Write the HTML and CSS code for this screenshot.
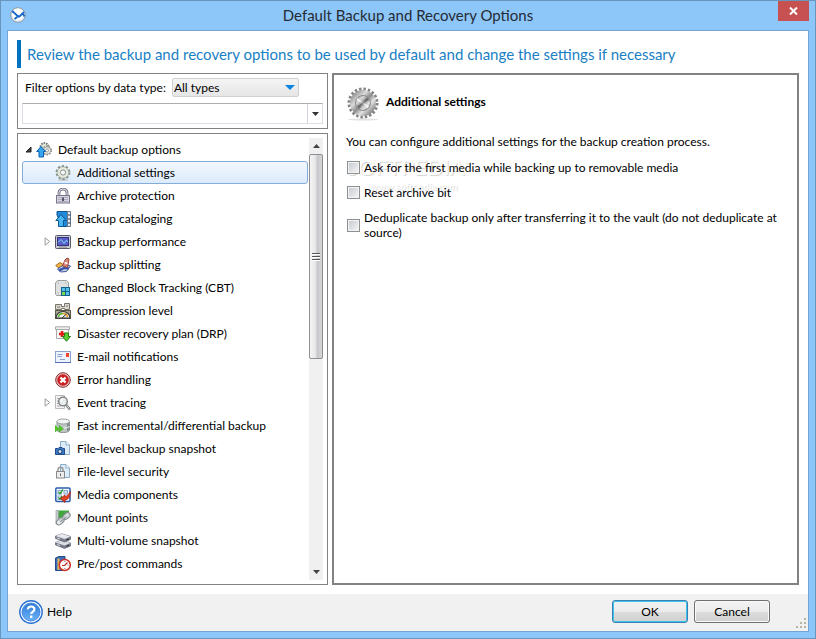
FILE: index.html
```html
<!DOCTYPE html>
<html lang="en">
<head>
    <meta charset="UTF-8">
    <meta name="viewport" content="width=device-width, initial-scale=1.0">
    <title>Default Backup and Recovery Options</title>
    <link rel="stylesheet" href="styles.css">
</head>
<body>
    <div class="window">
        <header class="titlebar">
            <svg class="app-icon" viewBox="0 0 16 16">
                <circle cx="8" cy="8" r="7.3" fill="#eceff1" stroke="#8a98a5"/>
                <circle cx="8" cy="7.2" r="5.8" fill="#fff"/>
                <path d="M2.2 4 7 8.500 9.500 9.500 14 5M8.500 9 4.500 12M12.500 6 14.500 9.500" fill="none" stroke="#1666c8" stroke-width="1.8"/>
            </svg>
            <h1>Default Backup and Recovery Options</h1>
            <button class="close" aria-label="Close">
                <svg viewBox="0 0 9 8"><path d="M1 .5 8 7.5M8 .5 1 7.5" stroke="#fff" stroke-width="2"/></svg>
            </button>
        </header>

        <div class="client">
            <main>
                <h2 class="intro">Review the backup and recovery options to be used by default and change the settings if necessary</h2>
                <div class="columns">
                    <div class="sidebar">
                        <form class="filter">
                            <div class="filter-row">
                                <label for="data-type">Filter options by data type:</label>
                                <div class="select-wrap">
                                    <select id="data-type">
                                        <option>All types</option>
                                    </select>
                                    <svg class="select-arrow" viewBox="0 0 10 5"><path d="M0 0H10L5 5Z" fill="#0a84e0"/></svg>
                                </div>
                            </div>
                            <div class="search">
                                <input type="text" aria-label="Search options">
                                <button type="button" aria-label="Show list">
                                    <svg viewBox="0 0 7 4"><path d="M0 0H7L3.5 4Z" fill="#333"/></svg>
                                </button>
                            </div>
                        </form>

                        <nav class="tree">
                            <ul>
                                <li class="root">
                                    <button class="expander" aria-label="Collapse"><svg viewBox="0 0 7 7"><path d="M6 1V6H1Z" fill="#404040" stroke="#222"/></svg></button>
                                    <a href="#">
                                        <svg class="icon" viewBox="0 0 16 16">
                                            <circle cx="8.5" cy="5" r="4" fill="#dfe3da" stroke="#77807a" stroke-width="2" stroke-dasharray="1.5 1"/>
                                            <circle cx="11" cy="8.5" r="4" fill="#eef0e8" stroke="#8a8f86" stroke-width="2" stroke-dasharray="1.5 1"/>
                                            <circle cx="11" cy="8.5" r="3.6" fill="#eef0e8" stroke="#8a8f86" stroke-width=".6"/>
                                            <circle cx="11" cy="8.5" r="1.5" fill="#fff" stroke="#777" stroke-width=".7"/>
                                            <path d="M5 4.500 .7 9.500H3V15H7.500V9.500H9.500Z" fill="#37a6ee" stroke="#0b5fae"/>
                                        </svg>
                                        Default backup options
                                    </a>
                                </li>
                                <li class="selected">
                                    <a href="#" aria-current="true">
                                        <svg class="icon" viewBox="0 0 16 16">
                                            <ellipse cx="8" cy="15" rx="5" ry="1" fill="#c4ccd2"/>
                                            <circle cx="8" cy="7.5" r="6.2" fill="none" stroke="#85918a" stroke-width="2.5" stroke-dasharray="2.2 1.7"/>
                                            <circle cx="8" cy="7.5" r="4" fill="none" stroke="#e6eadf" stroke-width="3.5"/>
                                            <circle cx="8" cy="7.5" r="5.7" fill="none" stroke="#98a292" stroke-width=".7"/>
                                            <circle cx="8" cy="7.5" r="2.6" fill="#f6fafd" stroke="#7d8781" stroke-width=".9"/>
                                        </svg>
                                        Additional settings
                                    </a>
                                </li>
                                <li>
                                    <a href="#">
                                        <svg class="icon" viewBox="0 0 16 16">
                                            <path d="M4 8V4.500A4 3.500 0 0 1 12 4.500V8" fill="none" stroke="#77758a" stroke-width="2.8"/>
                                            <path d="M4 8V4.500A4 3.500 0 0 1 12 4.500V8" fill="none" stroke="#dddde8"/>
                                            <rect x="1.5" y="7.5" width="13" height="7.5" fill="#d6d4e0" stroke="#77758a"/>
                                            <path d="M3 9.500H13M3 11.500H13M3 13.500H13" stroke="#a5a2b5" stroke-width=".8"/>
                                            <rect x="7" y="9.5" width="2" height="3.5" fill="#55536a"/>
                                        </svg>
                                        Archive protection
                                    </a>
                                </li>
                                <li>
                                    <a href="#">
                                        <svg class="icon" viewBox="0 0 16 16">
                                            <path d="M2 .5H12.500V15.500H7L2 4Z" fill="#2089d8" stroke="#0b5594"/>
                                            <path d="M12.500 .5H15.500V15.500H12.500Z" fill="#e9eef2" stroke="#637787"/>
                                            <path d="M13 4H15.500M13 8H15.500M13 12H15.500" stroke="#335"/>
                                            <path d="M6 3.500 .8 9.500H3.500V15.500H8.500V9.500H11.200Z" fill="#49b5f2" stroke="#0b5594"/>
                                        </svg>
                                        Backup cataloging
                                    </a>
                                </li>
                                <li>
                                    <button class="expander" aria-label="Expand"><svg viewBox="0 0 6 9"><path d="M.6 .8V8.200L5.200 4.500Z" fill="#fff" stroke="#999"/></svg></button>
                                    <a href="#">
                                        <svg class="icon" viewBox="0 0 16 16">
                                            <rect x=".5" y="1.5" width="15" height="13" rx="1" fill="#c9cbd3" stroke="#55576a"/>
                                            <rect x="2.5" y="3.5" width="11" height="8" fill="#5c5ccb" stroke="#33337a"/>
                                            <path d="M3 8.500 6 5.500 9 9.500 11 6.500 13 7.500" fill="none" stroke="#6fdef2"/>
                                            <path d="M4 13H12" stroke="#888"/>
                                        </svg>
                                        Backup performance
                                    </a>
                                </li>
                                <li>
                                    <a href="#">
                                        <svg class="icon" viewBox="0 0 16 16">
                                            <path d="M.7 8.500 5 5.500 9 8 4.500 11.500Z" fill="#f0b545" stroke="#a66b20"/>
                                            <path d="M2.500 12 9 7.500 15.500 9 11.500 14.500 5.500 15Z" fill="#c5cee8" stroke="#3e579a"/>
                                            <path d="M4 13.500 9 11 14 11.500" fill="none" stroke="#2f4ea5" stroke-width="2"/>
                                            <path d="M7.500 9 10 3Q12 -.5 14 2L12.500 10.500Z" fill="#d98a7e" stroke="#9d4234"/>
                                            <path d="M9.500 5.500 12.500 6.500" stroke="#fff" stroke-width="1.5"/>
                                        </svg>
                                        Backup splitting
                                    </a>
                                </li>
                                <li>
                                    <a href="#">
                                        <svg class="icon" viewBox="0 0 16 16">
                                            <path d="M2.500 .5H11.500L13.500 2.500V13.500L12 15.500H1.500L.5 14V3Z" fill="#dfe1e0" stroke="#999f9d"/>
                                            <path d="M2.500 3H4M10 3H11.500M2.500 13H4" stroke="#aaa"/>
                                            <rect x="6" y="7" width="9" height="9" fill="#14628a"/>
                                            <rect x="7" y="8" width="3" height="3" fill="#55c3ee"/>
                                            <rect x="11" y="8" width="3" height="3" fill="#55c3ee"/>
                                            <rect x="7" y="12" width="3" height="3" fill="#7bd94c"/>
                                            <rect x="11" y="12" width="3" height="3" fill="#55c3ee"/>
                                        </svg>
                                        Changed Block Tracking (CBT)
                                    </a>
                                </li>
                                <li>
                                    <a href="#">
                                        <svg class="icon" viewBox="0 0 16 16">
                                            <path d="M.5 1.500H6.500V3.500H9.500V.5H14.500V6.500H9.500V5.500H6.500V6.500H.5Z" fill="#dad8cf" stroke="#77756b"/>
                                            <path d="M2 4H5M11 3H13" stroke="#77756b"/>
                                            <rect x=".5" y="7.5" width="15" height="8" fill="#a9a593" stroke="#5d594a"/>
                                            <path d="M1 15A7 6.500 0 0 1 15 15Z" fill="#eee" stroke="#333" stroke-width="1.2"/>
                                            <path d="M3.500 14A4.500 4 0 0 1 8 10.500" fill="none" stroke="#5bb52c" stroke-width="1.5"/>
                                            <path d="M8 10.500A4.500 4 0 0 1 12.500 14" fill="none" stroke="#e5a323" stroke-width="1.5"/>
                                            <path d="M7 15 11.500 11" stroke="#333"/>
                                        </svg>
                                        Compression level
                                    </a>
                                </li>
                                <li>
                                    <a href="#">
                                        <svg class="icon" viewBox="0 0 16 16">
                                            <path d="M1.500 1.500H13.500V12.500H1.500Z" fill="#f7f7f7" stroke="#aaa"/>
                                            <path d="M.5 .8H14.500V3.500H.5Z" fill="#eee" stroke="#aaa"/>
                                            <path d="M7 5V11M4 8H10" stroke="#e01b13" stroke-width="2.5"/>
                                            <path d="M9.500 7H13.500V10.500H15.500L11.500 15.300 7.500 10.500H9.500Z" fill="#5dcd35" stroke="#257f13"/>
                                        </svg>
                                        Disaster recovery plan (DRP)
                                    </a>
                                </li>
                                <li>
                                    <a href="#">
                                        <svg class="icon" viewBox="0 0 16 16">
                                            <rect x=".5" y="2.5" width="15" height="11" fill="#edf3fd" stroke="#8da3ce"/>
                                            <path d="M0 13.500H16" stroke="#5770b5"/>
                                            <rect x="11" y="4" width="3" height="4" fill="#f0482d"/>
                                            <path d="M2.500 5.500H7.500M2.500 7.500H7M5 10.500H10" stroke="#8ba1cd"/>
                                        </svg>
                                        E-mail notifications
                                    </a>
                                </li>
                                <li>
                                    <a href="#">
                                        <svg class="icon" viewBox="0 0 16 16">
                                            <circle cx="8" cy="8" r="7.3" fill="#e2c5c5" stroke="#8d2a2a"/>
                                            <circle cx="8" cy="8" r="5.8" fill="#cc1f22"/>
                                            <path d="M5.500 5.500 10.500 10.500M10.500 5.500 5.500 10.500" stroke="#fff" stroke-width="2.4"/>
                                        </svg>
                                        Error handling
                                    </a>
                                </li>
                                <li>
                                    <button class="expander" aria-label="Expand"><svg viewBox="0 0 6 9"><path d="M.6 .8V8.200L5.200 4.500Z" fill="#fff" stroke="#999"/></svg></button>
                                    <a href="#">
                                        <svg class="icon" viewBox="0 0 16 16">
                                            <path d="M.5 .5H9.500V13.500H.5Z" fill="#f3f3f3" stroke="#bbb"/>
                                            <path d="M2 3.500H6M2 6H4M2 8.500H4M2 11H6" stroke="#aaa"/>
                                            <circle cx="8" cy="6.5" r="4.3" fill="#e7ecee" stroke="#777" stroke-width="1.3"/>
                                            <path d="M6 6.500A2 2 0 0 1 8 4.500" fill="none" stroke="#fff" stroke-width="1.5"/>
                                            <path d="M11 9.800 15 14.500" stroke="#777" stroke-width="2.5"/>
                                            <path d="M11.500 10.300 14.500 13.800" stroke="#ddd"/>
                                        </svg>
                                        Event tracing
                                    </a>
                                </li>
                                <li>
                                    <a href="#">
                                        <svg class="icon" viewBox="0 0 16 16">
                                            <path d="M2 3.500V12A6 2.500 0 0 0 14.500 12V3.500" fill="#bfc4c5" stroke="#8d9393"/>
                                            <path d="M12 4H14.500V12L12 13.500Z" fill="#868d8d"/>
                                            <ellipse cx="8.2" cy="3.5" rx="6.3" ry="2.5" fill="#f2f4f4" stroke="#999f9f"/>
                                            <path d="M2 8A6 2 0 0 0 14.500 8" fill="none" stroke="#f5f5f5"/>
                                            <path d="M0 7.500 4 10.700 0 14ZM4 7.500 8.500 10.700 4 14Z" fill="#55c928" stroke="#3aa520" stroke-width=".6"/>
                                        </svg>
                                        Fast incremental/differential backup
                                    </a>
                                </li>
                                <li>
                                    <a href="#">
                                        <svg class="icon" viewBox="0 0 16 16">
                                            <path d="M5.500 .5H11L14.500 4V13.500H5.500Z" fill="#dcecf8" stroke="#8aacc4"/>
                                            <path d="M11 .5V4H14.500" fill="#fff" stroke="#8aacc4"/>
                                            <path d="M.5 7.500H3L4 6.500H7L8 7.500H9.500V13.500H.5Z" fill="#397bc4" stroke="#214b86"/>
                                            <circle cx="5" cy="10.5" r="2" fill="#d6e9f8" stroke="#173766"/>
                                        </svg>
                                        File-level backup snapshot
                                    </a>
                                </li>
                                <li>
                                    <a href="#">
                                        <svg class="icon" viewBox="0 0 16 16">
                                            <path d="M5.500 .5H11L14.500 4V13.500H5.500Z" fill="#dcecf8" stroke="#8aacc4"/>
                                            <path d="M11 .5V4H14.500" fill="#fff" stroke="#8aacc4"/>
                                            <path d="M3 8V6A2.500 2.700 0 0 1 8 6V8" fill="none" stroke="#999" stroke-width="1.5"/>
                                            <rect x="1.5" y="7.5" width="8" height="6.5" fill="#eee" stroke="#888"/>
                                            <path d="M5.500 9.500V12" stroke="#666"/>
                                        </svg>
                                        File-level security
                                    </a>
                                </li>
                                <li>
                                    <a href="#">
                                        <svg class="icon" viewBox="0 0 16 16">
                                            <rect x=".8" y="1" width="14.2" height="13.5" rx="1" fill="#f6f9ff" stroke="#2d5fae" stroke-width="1.5"/>
                                            <rect x="3" y="3.5" width="3.5" height="3.5" fill="#fff" stroke="#8ea6cc"/>
                                            <rect x="9" y="3.5" width="3.5" height="3.5" fill="#cfe0f6" stroke="#8ea6cc"/>
                                            <rect x="3" y="9" width="3.5" height="3.5" fill="#fff" stroke="#8ea6cc"/>
                                            <path d="M3.500 5 5 6.500 8 2.500M3.500 10.500 5 12 7 9" fill="none" stroke="#24a02b" stroke-width="1.3"/>
                                            <path d="M15.500 4.500 14.500 10Q13 12.500 10 13V15.500L5.500 11.500 10 8V10Q13 9 15.500 4.500Z" fill="#e64226" stroke="#a41f12" stroke-width=".8"/>
                                        </svg>
                                        Media components
                                    </a>
                                </li>
                                <li>
                                    <a href="#">
                                        <svg class="icon" viewBox="0 0 16 16">
                                            <path d="M3 .5H14V6L6 12H3Z" fill="#3fa73c"/>
                                            <path d="M1 .5H3.500V14H1Z" fill="#c9ced0" stroke="#8b9294" stroke-width=".6"/>
                                            <rect x="7.5" y="3.5" width="8" height="5" rx="2.5" transform="rotate(-42 11.5 6)" fill="#d5d9db" stroke="#858c90" stroke-width="1.2"/>
                                            <rect x="1" y="9" width="8.5" height="5" rx="2.5" transform="rotate(-42 5 11.5)" fill="#e9ebec" stroke="#858c90" stroke-width="1.2"/>
                                            <path d="M5 11.500 11 6.500" stroke="#858d91" stroke-width="2"/>
                                            <path d="M5 11 11 6" stroke="#eee" stroke-width=".8"/>
                                        </svg>
                                        Mount points
                                    </a>
                                </li>
                                <li>
                                    <a href="#">
                                        <svg class="icon" viewBox="0 0 16 16">
                                            <path d="M.5 9.500 7 7 15.500 10V13L9.500 15.500 .5 12Z" fill="#777b8b" stroke="#555968" stroke-width=".6"/>
                                            <path d="M.5 9.500 7 7 15.500 10 9.500 12.500Z" fill="#dddfe6"/>
                                            <path d="M.5 3 7 .8 15.500 3.500V6.500L9.500 9 .5 5.500Z" fill="#777b8b" stroke="#555968" stroke-width=".6"/>
                                            <path d="M.5 3 7 .8 15.500 3.500 9.500 6Z" fill="#e6e8ee"/>
                                            <path d="M2 5 5 6M2 11.500 5 12.500" stroke="#ddd"/>
                                            <path d="M11.500 7 14 6M11.500 13.300 14 12.300" stroke="#222"/>
                                        </svg>
                                        Multi-volume snapshot
                                    </a>
                                </li>
                                <li>
                                    <a href="#">
                                        <svg class="icon" viewBox="0 0 16 16">
                                            <path d="M.5 2 4 .5H10V14.500H.5Z" fill="#3c6db7" stroke="#254b86"/>
                                            <path d="M2.500 2.500H4.500V14H2.500Z" fill="#e8bd59"/>
                                            <circle cx="9.8" cy="9" r="5.5" fill="#fff" stroke="#cf2e27" stroke-width="1.5"/>
                                            <path d="M9.500 9.500 12.500 6.500M9.500 9.500H7" stroke="#c02a25" stroke-width="1.2"/>
                                            <path d="M9.800 5V6M9.800 12V13M13.500 9H12.500" stroke="#555" stroke-width=".8"/>
                                        </svg>
                                        Pre/post commands
                                    </a>
                                </li>
                            </ul>
                            <div class="scrollbar">
                                <button aria-label="Scroll up"><svg viewBox="0 0 7 4"><path d="M0 4H7L3.5 0Z" fill="#444"/></svg></button>
                                <div class="track">
                                    <div class="thumb">
                                        <svg viewBox="0 0 8 8"><path d="M0 .5H8M0 3.500H8M0 6.500H8" stroke="#555"/><path d="M0 1.500H8M0 4.500H8M0 7.500H8" stroke="#fff"/></svg>
                                    </div>
                                </div>
                                <button aria-label="Scroll down"><svg viewBox="0 0 7 4"><path d="M0 0H7L3.5 4Z" fill="#444"/></svg></button>
                            </div>
                        </nav>
                    </div>

                    <section class="details">
                        <div class="details-head">
                            <svg class="gear" viewBox="0 0 32 34">
                                <defs>
                                    <linearGradient id="steel" x1="0" y1="0" x2="1" y2="1">
                                        <stop offset="0" stop-color="#8d8d8d"/>
                                        <stop offset=".3" stop-color="#d9d9d9"/>
                                        <stop offset=".5" stop-color="#8f8f8f"/>
                                        <stop offset=".7" stop-color="#e2e2e2"/>
                                        <stop offset="1" stop-color="#777"/>
                                    </linearGradient>
                                </defs>
                                <ellipse cx="16" cy="32.5" rx="15" ry="1" fill="#e2e2e2"/>
                                <circle cx="16" cy="16" r="13.5" fill="none" stroke="#858585" stroke-width="4" stroke-dasharray="2.4 1.84"/>
                                <circle cx="16" cy="16" r="10" fill="none" stroke="url(#steel)" stroke-width="6"/>
                                <circle cx="16" cy="16" r="7.5" fill="url(#steel)" stroke="#777" stroke-width=".8"/>
                                <path d="M16 16 9.500 13.500 10.500 11ZM16 16 22 19 20.500 21.500Z" fill="#f4f4f4"/>
                                <path d="M16 16 19.500 10.500 22 13ZM16 16 10 19 12.500 21.500Z" fill="#6c6c6c"/>
                            </svg>
                            <h3>Additional settings</h3>
                        </div>
                        <p>You can configure additional settings for the backup creation process.</p>
                        <div class="options">
                            <div class="watermark">
                                <div class="watermark-name">SOFTPEDIA<sup>™</sup></div>
                                <div class="watermark-url">www.softpedia.com</div>
                            </div>
                            <div class="option">
                                <input type="checkbox" id="first-media">
                                <label for="first-media">Ask for the first media while backing up to removable media</label>
                            </div>
                            <div class="option">
                                <input type="checkbox" id="reset-bit">
                                <label for="reset-bit">Reset archive bit</label>
                            </div>
                            <div class="option">
                                <input type="checkbox" id="deduplicate">
                                <label for="deduplicate">Deduplicate backup only after transferring it to the vault (do not deduplicate at source)</label>
                            </div>
                        </div>
                    </section>
                </div>
            </main>

            <footer>
                <a class="help" href="#">
                    <svg viewBox="0 0 24 24">
                        <defs>
                            <linearGradient id="help-fill" x1="0" y1="0" x2="0" y2="1">
                                <stop offset="0" stop-color="#2f78d6"/>
                                <stop offset="1" stop-color="#6bb5f7"/>
                            </linearGradient>
                        </defs>
                        <circle cx="12" cy="12" r="11.2" fill="#fff" stroke="#2b72d6" stroke-width="1.4"/>
                        <circle cx="12" cy="12" r="9" fill="url(#help-fill)" stroke="#4a8be0"/>
                        <path d="M8.800 9.300Q9 6.500 12.200 6.500T15.400 9.300Q15.400 10.800 13.700 11.700 12.200 12.600 12.200 14" fill="none" stroke="#fff" stroke-width="2.2"/>
                        <rect x="11" y="15.5" width="2.4" height="2.4" fill="#fff"/>
                    </svg>
                    Help
                </a>
                <button class="push default">OK</button>
                <button class="push">Cancel</button>
                <svg class="grip" viewBox="0 0 11 11"><path d="M8 0H10V2H8ZM4 4H6V6H4ZM8 4H10V6H8ZM0 8H2V10H0ZM4 8H6V10H4ZM8 8H10V10H8Z" fill="#b5b5a2"/></svg>
            </footer>
        </div>
    </div>
</body>
</html>
```
FILE: styles.css
```css
* {
    box-sizing: border-box;
}
body {
    margin: 0;
    font-family: Lato, "Open Sans", sans-serif;
    font-size: 12px;
    line-height: 15px;
    color: #000;
}
h1, h2, h3, p, ul {
    margin: 0;
    padding: 0;
    font-weight: normal;
}
button, input, select {
    font: inherit;
    color: inherit;
}
a {
    color: inherit;
    text-decoration: none;
}
svg {
    display: block;
    flex-shrink: 0;
}
.window {
    display: flex;
    flex-direction: column;
    min-height: 100vh;
    border: 1px solid #6996bf;
    background: #8dc6f9;
}

/* title bar */
.titlebar {
    display: grid;
    grid-template-columns: 48px 1fr 48px;
    height: 29px;
}
.app-icon {
    width: 16px;
    height: 16px;
    margin: 6px 0 0 9px;
}
.titlebar h1 {
    font-size: 15px;
    line-height: 29px;
    text-align: center;
    color: #252b33;
}
.close {
    display: flex;
    align-items: center;
    justify-content: center;
    justify-self: end;
    width: 31px;
    height: 20px;
    margin-right: 6px;
    padding: 0;
    border: 0;
    background: #c75050;
}
.close svg {
    width: 9px;
    height: 8px;
}

/* client area */
.client {
    display: flex;
    flex-direction: column;
    flex: 1;
    margin: 0 6px 6px;
    border: 1px solid #72a5d3;
    background: #fff;
}
main {
    display: flex;
    flex-direction: column;
    flex: 1;
    gap: 5px;
    padding: 9px;
}
.intro {
    border-left: 4px solid #0072c0;
    padding-left: 6px;
    font-size: 15px;
    line-height: 28px;
    color: #1a80c4;
}
.columns {
    display: grid;
    grid-template-columns: 311px 1fr;
    gap: 4px;
    flex: 1;
}
.sidebar {
    display: flex;
    flex-direction: column;
    gap: 4px;
}

/* filter */
.filter {
    display: flex;
    flex-direction: column;
    gap: 6px;
    height: 56px;
    padding: 4px;
    border: 1px solid #828282;
}
.filter-row {
    display: flex;
    align-items: center;
    gap: 6px;
    padding-left: 3px;
}
.select-wrap {
    position: relative;
    width: 127px;
}
.select-wrap select {
    display: block;
    appearance: none;
    width: 100%;
    height: 19px;
    padding: 0 1px;
    border: 1px solid #d0d0d0;
    border-radius: 2px;
    background: linear-gradient(#f4f4f4, #e6e6e6);
}
.select-arrow {
    position: absolute;
    top: 7px;
    right: 4px;
    width: 10px;
    height: 5px;
    pointer-events: none;
}
.search {
    display: flex;
    height: 21px;
    border: 1px solid #dcdce4;
    border-top-color: #abadb3;
}
.search input {
    flex: 1;
    min-width: 0;
    padding: 0 4px;
    border: 0;
}
.search button {
    display: flex;
    align-items: center;
    justify-content: center;
    width: 15px;
    padding: 0;
    border: 0;
    border-left: 1px solid #d0d4e0;
    background: #fff;
}
.search svg {
    width: 7px;
    height: 4px;
}

/* options tree */
.tree {
    display: flex;
    flex: 1;
    gap: 1px;
    padding: 4px;
    border: 1px solid #828282;
}
.tree ul {
    flex: 1;
    list-style: none;
}
.tree li {
    display: flex;
    align-items: center;
    justify-content: flex-end;
    height: 23px;
    border: 1px solid transparent;
    border-radius: 3px;
}
.tree li a {
    display: flex;
    align-items: center;
    gap: 6px;
    width: 252px;
}
.tree li.root a {
    width: 271px;
}
.tree li.selected {
    border-color: #84acdd;
    background: linear-gradient(#f2f8fe, #dcebfc);
}
.icon {
    width: 16px;
    height: 16px;
}
.expander {
    width: 7px;
    margin-right: 4px;
    padding: 0;
    border: 0;
    background: none;
}
.expander svg {
    width: 7px;
    height: 9px;
}
.root .expander svg {
    height: 7px;
}
.scrollbar {
    display: flex;
    flex-direction: column;
    width: 14px;
    background: #f0f0f0;
}
.scrollbar button {
    display: flex;
    align-items: center;
    justify-content: center;
    height: 16px;
    padding: 0;
    border: 0;
    background: #f0f0f0;
}
.scrollbar button svg {
    width: 7px;
    height: 4px;
}
.track {
    flex: 1;
}
.thumb {
    display: flex;
    align-items: center;
    justify-content: center;
    height: 50%;
    border: 1px solid #8f8f8f;
    border-radius: 2px;
    background: linear-gradient(to right, #f5f5f5, #e6e6e8 45%, #c8c8cc 60%, #d6d6d8);
}
.thumb svg {
    width: 8px;
    height: 8px;
}

/* details pane */
.details {
    padding: 12px;
    border: 2px solid #828282;
}
.details-head {
    display: flex;
    align-items: center;
    gap: 7px;
    padding-left: 1px;
}
.gear {
    width: 32px;
    height: 34px;
}
.details h3 {
    font-size: 12px;
    font-weight: bold;
    padding-bottom: 5px;
}
.details p {
    margin: 13px 0 11px;
}
.options {
    position: relative;
    display: flex;
    flex-direction: column;
    gap: 10px;
}
.option {
    position: relative;
    display: flex;
    align-items: center;
    gap: 4px;
    padding-left: 1px;
}
.option input {
    appearance: none;
    flex-shrink: 0;
    width: 13px;
    height: 13px;
    margin: 0;
    border: 1px solid #8e8f8f;
    background: linear-gradient(135deg, #c3c8cf, #f6f6f6);
    box-shadow: inset 0 0 0 1px #f4f4f4;
}
.watermark {
    position: absolute;
    top: -8px;
    left: 0;
    color: #fff;
    text-shadow: 1px 1px 1px rgba(0, 0, 0, 0.18);
    pointer-events: none;
}
.watermark-name {
    font-size: 22px;
    line-height: 24px;
}
.watermark-name sup {
    font-size: 8px;
}
.watermark-url {
    padding-left: 24px;
    font-size: 10px;
}

/* footer */
footer {
    display: flex;
    align-items: center;
    gap: 6px;
    height: 37px;
    padding: 0 0 2px 11px;
    background: #f1f1f1;
}
.help {
    display: flex;
    align-items: center;
    gap: 4px;
    margin-right: auto;
}
.help svg {
    width: 24px;
    height: 24px;
}
.push {
    width: 76px;
    height: 23px;
    padding: 0;
    border: 1px solid #707070;
    border-radius: 3px;
    background: linear-gradient(#f2f2f2, #ebebeb 50%, #dddddd 50%, #cfcfcf);
    box-shadow: inset 0 0 0 1px #fafafa;
}
.push.default {
    border-color: #3c7fb1;
    box-shadow: inset 0 0 0 1px #3cc3ee;
}
.grip {
    align-self: flex-end;
    width: 11px;
    height: 11px;
    margin: 0 1px 0 20px;
}
```
